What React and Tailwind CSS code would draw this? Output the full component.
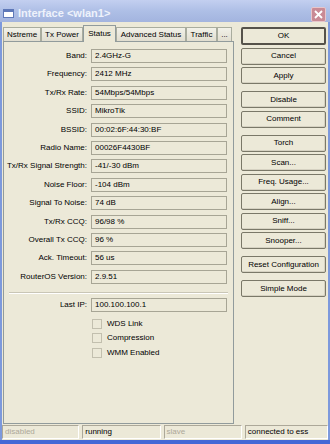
import React from "react";

const rows = [
  ["Band:", "2.4GHz-G"],
  ["Frequency:", "2412 MHz"],
  ["Tx/Rx Rate:", "54Mbps/54Mbps"],
  ["SSID:", "MikroTik"],
  ["BSSID:", "00:02:6F:44:30:BF"],
  ["Radio Name:", "00026F4430BF"],
  ["Tx/Rx Signal Strength:", "-41/-30 dBm"],
  ["Noise Floor:", "-104 dBm"],
  ["Signal To Noise:", "74 dB"],
  ["Tx/Rx CCQ:", "96/98 %"],
  ["Overall Tx CCQ:", "96 %"],
  ["Ack. Timeout:", "56 us"],
  ["RouterOS Version:", "2.9.51"],
];

const buttonGroups = [
  ["OK", "Cancel", "Apply"],
  ["Disable", "Comment"],
  ["Torch", "Scan...", "Freq. Usage...", "Align...", "Sniff...", "Snooper..."],
  ["Reset Configuration"],
  ["Simple Mode"],
];

const tabs = ["Nstreme", "Tx Power", "Status", "Advanced Status", "Traffic", "..."];
const tabWidths = ["w-[38px]", "w-[42px]", "w-[33px]", "w-[70px]", "w-[31px]", "w-[15px]"];

function Field({ label, value }) {
  return (
    <div className="flex items-center h-[14px]">
      <div className="w-[84px] text-right pr-[1px] text-black">{label}</div>
      <div className="ml-[3px] w-[136px] h-[14px] border border-[#a7a595] flex items-center pl-[3px] text-black">
        {value}
      </div>
    </div>
  );
}

function Check({ label }) {
  return (
    <div className="flex items-center h-[14px] ml-[88px]">
      <div className="w-[10px] h-[10px] border border-[#c2bfae] bg-[#ece9d8]" />
      <span className="ml-[5px] text-black">{label}</span>
    </div>
  );
}

function Btn({ label, isDefault }) {
  return (
    <div
      className={
        isDefault
          ? "h-[18px] w-[85px] border-[2px] border-[#55524a] rounded-[2px] flex items-center justify-center text-black"
          : "h-[17px] w-[85px] border border-[#7a7868] rounded-[2px] bg-[#ece9d8] shadow-[inset_-1px_-1px_0_#d6d2c2] flex items-center justify-center text-black"
      }
    >
      {label}
    </div>
  );
}

export default function App() {
  return (
    <div
      className="w-[330px] h-[444px] flex flex-col bg-[#ece9d8] overflow-hidden text-[8px] leading-none"
      style={{ fontFamily: '"Liberation Sans", Arial, sans-serif' }}
    >
      {/* title bar */}
      <div className="h-[22px] flex items-center bg-gradient-to-b from-[#c3cff0] via-[#aebfe6] to-[#a3b4df] shrink-0">
        <div className="ml-[3px] mt-[4px] w-[11px] h-[9px] border border-[#5e78b8] border-t-[3px] bg-white" />
        <span className="ml-[4px] mt-[4px] text-[11px] font-bold text-[#eef2fb]">Interface &lt;wlan1&gt;</span>
        <div className="ml-auto mr-[4px] mt-[6px] w-[15px] h-[15px] rounded-[2px] bg-[#c98a95] border border-[#e7c6cb] flex items-center justify-center">
          <svg width="9" height="9" viewBox="0 0 9 9">
            <path d="M1 1 L8 8 M8 1 L1 8" stroke="white" strokeWidth="1.8" />
          </svg>
        </div>
      </div>

      {/* body */}
      <div className="flex-1 flex flex-col border-l-[2px] border-r-[2px] border-[#7d99dc]">
        <div className="flex-1 flex">
          {/* left: tabs + panel */}
          <div className="ml-[1px] w-[231px] flex flex-col">
            <div className="h-[19px] flex items-end pt-[3px]">
              {tabs.map((t, i) =>
                t === "Status" ? (
                  <div
                    key={t}
                    className={`${tabWidths[i]} h-[17px] -mb-[1px] border border-b-0 border-[#919b9c] bg-[#ece9d8] flex items-center justify-center relative z-10 text-black`}
                  >
                    {t}
                  </div>
                ) : (
                  <div
                    key={t}
                    className={`${tabWidths[i]} h-[14px] border border-b-0 border-[#a9ac9e] bg-gradient-to-b from-[#f2f1e9] to-[#e1ded0] flex items-center justify-center text-black`}
                  >
                    {t}
                  </div>
                )
              )}
            </div>
            <div className="flex-1 border border-[#919b9c] bg-[#ece9d8] pt-[7px] flex flex-col">
              <div className="flex flex-col gap-[4.4px]">
                {rows.map(([l, v]) => (
                  <Field key={l} label={l} value={v} />
                ))}
              </div>
              <div className="mt-[8px] ml-[5px] w-[219px] border-t border-[#c9c6b6] border-b border-b-white" />
              <div className="mt-[4px]">
                <Field label="Last IP:" value="100.100.100.1" />
              </div>
              <div className="mt-[5px] flex flex-col gap-[0.5px]">
                <Check label="WDS Link" />
                <Check label="Compression" />
                <Check label="WMM Enabled" />
              </div>
            </div>
          </div>

          {/* right: buttons */}
          <div className="ml-[7px] pt-[5px] flex flex-col gap-[7px]">
            {buttonGroups.map((g, gi) => (
              <div key={gi} className="flex flex-col gap-[2.5px]">
                {g.map((b) => (
                  <Btn key={b} label={b} isDefault={b === "OK"} />
                ))}
              </div>
            ))}
          </div>
        </div>

        {/* status bar */}
        <div className="h-[15px] mt-[1px] flex gap-[3px] pb-[1px]">
          {[
            ["disabled", "text-[#aca899]", "w-[78px]"],
            ["running", "text-black", "w-[79px]"],
            ["slave", "text-[#aca899]", "w-[79px]"],
            ["connected to ess", "text-black", "w-[84px]"],
          ].map(([t, c, w]) => (
            <div
              key={t}
              className={`${w} h-[14px] border border-[#aca899] border-r-white border-b-white flex items-center pl-[2px] ${c}`}
            >
              {t}
            </div>
          ))}
        </div>
      </div>
      <div className="h-[4px] bg-[#4468d6] shrink-0" />
    </div>
  );
}
